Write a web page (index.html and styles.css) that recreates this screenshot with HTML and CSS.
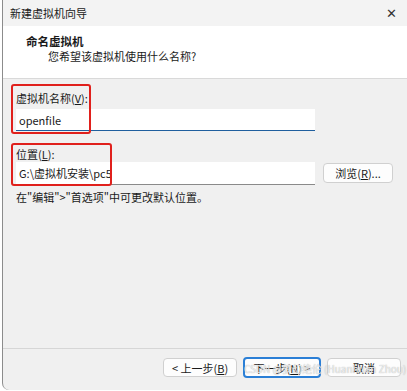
FILE: index.html
```html
<!DOCTYPE html>
<html lang="zh-CN">

<head>
    <meta charset="UTF-8">
    <title>新建虚拟机向导</title>
    <link rel="stylesheet" href="styles.css">
</head>

<body>
    <div class="window">
        <div class="titlebar">
            <span>新建虚拟机向导</span>
            <span class="close">✕</span>
        </div>

        <div class="header">
            <div class="heading">命名虚拟机</div>
            <div class="subtitle">您希望该虚拟机使用什么名称?</div>
        </div>

        <div class="content">
            <div class="field">
                <label>虚拟机名称(<u>V</u>):</label>
                <input type="text" class="name-input" value="openfile">
                <div class="mark mark-name"></div>
            </div>

            <div class="field field-location">
                <label>位置(<u>L</u>):</label>
                <div class="row">
                    <input type="text" class="path-input" value="G:\虚拟机安装\pc5">
                    <button class="btn browse">浏览(<u>R</u>)...</button>
                </div>
                <div class="mark mark-path"></div>
            </div>

            <p class="hint">在"编辑"&gt;"首选项"中可更改默认位置。</p>
        </div>

        <div class="footer">
            <button class="btn">&lt; 上一步(<u>B</u>)</button>
            <button class="btn primary">下一步(<u>N</u>) &gt;</button>
            <button class="btn">取消</button>
            <span class="watermark">CSDN @梦幻绝伦 (Huanhuan Zhou)</span>
        </div>
    </div>
</body>

</html>
```

FILE: styles.css
```css
body {
    margin: 0;
    padding: 0;
    background: #ffffff;
    font-family: "Noto Sans CJK SC", "Liberation Sans", sans-serif;
    font-size: 11px;
    color: #1a1a1a;
}

.window {
    margin-left: 2px;
    height: 390px;
    display: flex;
    flex-direction: column;
    border-left: 1px solid #8c8c8c;
    border-bottom-left-radius: 7px;
    background: #f0f0f0;
    overflow: hidden;
}

.titlebar {
    height: 26px;
    line-height: 26px;
    padding: 0 8px 0 7px;
    background: #f3f3f3;
    display: flex;
    justify-content: space-between;
}

.close {
    font-size: 13px;
    color: #333;
    margin-right: 2px;
}

.header {
    height: 53px;
    box-sizing: border-box;
    padding: 8px 0 0 23px;
    background: #ffffff;
    border-bottom: 1px solid #d9d9d9;
    line-height: 15px;
}

.heading {
    font-weight: bold;
    font-size: 11.5px;
}

.subtitle {
    padding-left: 22px;
}

.content {
    flex: 1;
    padding: 12px 0 0 13px;
}

.field {
    position: relative;
}

.field label {
    display: block;
    line-height: 15px;
}

.field-location {
    margin-top: 16px;
}

input {
    display: block;
    box-sizing: border-box;
    width: 299px;
    margin: 0;
    padding: 0 0 0 3px;
    border: none;
    background: #ffffff;
    font-family: inherit;
    font-size: 11px;
    color: #1a1a1a;
    outline: none;
}

.name-input {
    margin-top: 3px;
    height: 22px;
    border-bottom: 1px solid #1f5f9e;
}

.path-input {
    height: 23px;
    border-bottom: 1px solid #8a8a8a;
}

.row {
    display: flex;
    align-items: flex-start;
    gap: 8px;
}

.btn {
    height: 20px;
    padding: 0;
    border: 1px solid #d0d0d0;
    border-radius: 4px;
    background: #fdfdfd;
    font-family: inherit;
    font-size: 11px;
    color: #1a1a1a;
}

.browse {
    width: 70px;
    margin-top: 1px;
}

.hint {
    margin: 5px 0 0;
    line-height: 15px;
}

/* red annotation frames */
.mark {
    position: absolute;
    border: 2px solid #e0201c;
    border-radius: 3px;
    pointer-events: none;
}

.mark-name {
    left: -5px;
    top: -7px;
    width: 76px;
    height: 46px;
}

.mark-path {
    left: -5px;
    top: -4px;
    width: 97px;
    height: 39px;
}

.footer {
    position: relative;
    height: 32px;
    border-top: 1px solid #d6d6d6;
    display: flex;
    justify-content: flex-end;
    align-items: flex-start;
    gap: 6px;
    padding: 9px 6px 0 0;
}

.footer .btn {
    width: 74px;
    height: 19px;
}

.footer .primary {
    width: 78px;
    border: 2px solid #2b7fd6;
    margin-top: -1px;
    height: 21px;
}

.watermark {
    position: absolute;
    left: 241px;
    top: 12px;
    font-size: 10px;
    color: rgba(255, 255, 255, 0.75);
    text-shadow: 0 0 1px #9a9a9a;
    white-space: nowrap;
    pointer-events: none;
}
```
